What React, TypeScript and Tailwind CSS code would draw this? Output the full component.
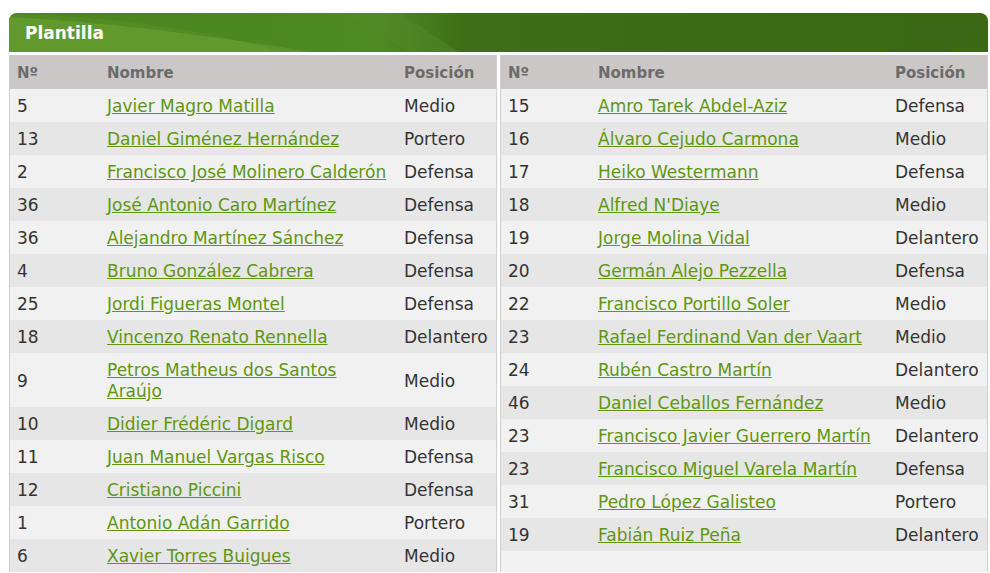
const left = [
  { n: "5", name: "Javier Magro Matilla", pos: "Medio" },
  { n: "13", name: "Daniel Giménez Hernández", pos: "Portero" },
  { n: "2", name: "Francisco José Molinero Calderón", pos: "Defensa" },
  { n: "36", name: "José Antonio Caro Martínez", pos: "Defensa" },
  { n: "36", name: "Alejandro Martínez Sánchez", pos: "Defensa" },
  { n: "4", name: "Bruno González Cabrera", pos: "Defensa" },
  { n: "25", name: "Jordi Figueras Montel", pos: "Defensa" },
  { n: "18", name: "Vincenzo Renato Rennella", pos: "Delantero" },
  { n: "9", name: "Petros Matheus dos Santos Araújo", pos: "Medio" },
  { n: "10", name: "Didier Frédéric Digard", pos: "Medio" },
  { n: "11", name: "Juan Manuel Vargas Risco", pos: "Defensa" },
  { n: "12", name: "Cristiano Piccini", pos: "Defensa" },
  { n: "1", name: "Antonio Adán Garrido", pos: "Portero" },
  { n: "6", name: "Xavier Torres Buigues", pos: "Medio" },
];

const right = [
  { n: "15", name: "Amro Tarek Abdel-Aziz", pos: "Defensa" },
  { n: "16", name: "Álvaro Cejudo Carmona", pos: "Medio" },
  { n: "17", name: "Heiko Westermann", pos: "Defensa" },
  { n: "18", name: "Alfred N'Diaye", pos: "Medio" },
  { n: "19", name: "Jorge Molina Vidal", pos: "Delantero" },
  { n: "20", name: "Germán Alejo Pezzella", pos: "Defensa" },
  { n: "22", name: "Francisco Portillo Soler", pos: "Medio" },
  { n: "23", name: "Rafael Ferdinand Van der Vaart", pos: "Medio" },
  { n: "24", name: "Rubén Castro Martín", pos: "Delantero" },
  { n: "46", name: "Daniel Ceballos Fernández", pos: "Medio" },
  { n: "23", name: "Francisco Javier Guerrero Martín", pos: "Delantero" },
  { n: "23", name: "Francisco Miguel Varela Martín", pos: "Defensa" },
  { n: "31", name: "Pedro López Galisteo", pos: "Portero" },
  { n: "19", name: "Fabián Ruiz Peña", pos: "Delantero" },
];

type Player = { n: string; name: string; pos: string };

function Squad({ rows }: { rows: Player[] }) {
  return (
    <div className="w-[488px] shrink-0 bg-[#f1f1f1] border-x border-[#cfcfcf]">
      <table className="w-full table-fixed border-collapse text-left">
        <thead>
          <tr className="bg-[#cbc7c6] text-[#6b6b6b] text-[15px]">
            <th className="w-[97px] h-[34px] pl-[7px] pt-[2px] font-bold">Nº</th>
            <th className="w-[297px] pt-[2px] font-bold">Nombre</th>
            <th className="pt-[2px] font-bold">Posición</th>
          </tr>
        </thead>
        <tbody>
          {rows.map((r, i) => (
            <tr key={i} className={i % 2 === 0 ? "bg-[#f1f1f1]" : "bg-[#e6e6e6]"}>
              <td className="pl-[7px] pt-[7px] pb-[5px] leading-[21px]">{r.n}</td>
              <td className="pt-[7px] pb-[5px] pr-2 leading-[21px]">
                <a href="#" className="text-[#5f9612] underline">
                  {r.name}
                </a>
              </td>
              <td className="pt-[7px] pb-[5px] leading-[21px] whitespace-nowrap">{r.pos}</td>
            </tr>
          ))}
        </tbody>
      </table>
    </div>
  );
}

export default function App() {
  return (
    <div className="w-[990px] h-[573px] overflow-hidden bg-white pt-[13px] pl-[9px] pr-[2px] font-['DejaVu_Sans',Verdana,sans-serif] text-[17px] text-[#333]">
      <div className="relative h-[39px] rounded-t-[8px] overflow-hidden bg-[linear-gradient(to_right,#4a851f_0%,#4d8a22_38%,#3d6d17_47%,#3a6814_100%)]">
        <svg className="absolute inset-0" width="979" height="39" viewBox="0 0 979 39" preserveAspectRatio="none">
          <path d="M0 4 C90 8 200 22 300 39 L0 39 Z" fill="#62992c" />
          <path d="M0 0 C100 4 200 16 270 39 L300 39 C200 22 90 8 0 4 Z" fill="#58902a" opacity="0.6" />
          <path d="M330 0 C360 14 380 28 400 39 L450 39 C430 26 410 12 390 0 Z" fill="#528a25" opacity="0.5" />
        </svg>
        <div className="relative pl-[16px] pt-[8px] text-white font-bold text-[17px] leading-[24px]">Plantilla</div>
      </div>
      <div className="flex gap-[3px] mt-[3px]">
        <Squad rows={left} />
        <Squad rows={right} />
      </div>
    </div>
  );
}
